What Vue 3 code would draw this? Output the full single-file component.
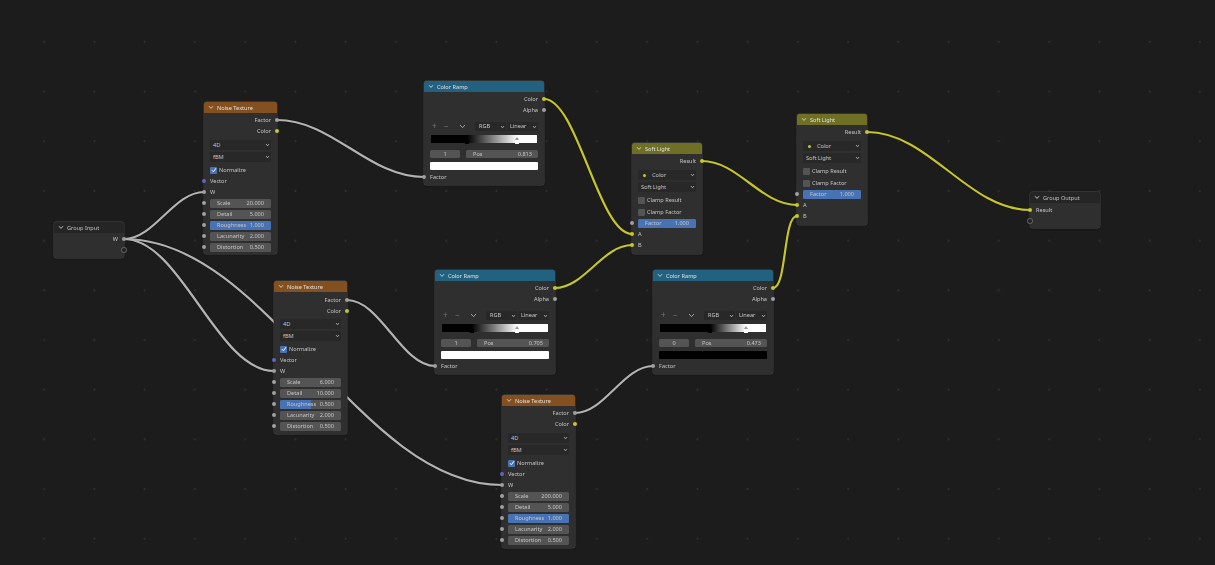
<script setup>
const GRAY = '#b2b2b2'
const YEL = '#c4c42c'

const noiseRows = (scale, detail, rough, frac) => [
  { t: 'out', label: 'Factor', sock: 'gray' },
  { t: 'out', label: 'Color', sock: 'yellow' },
  { t: 'drop', label: '4D', cls: 'first' },
  { t: 'drop', label: 'fBM' },
  { t: 'check', label: 'Normalize', on: true, cls: 'after' },
  { t: 'in', label: 'Vector', sock: 'blue' },
  { t: 'in', label: 'W', sock: 'gray' },
  { t: 'field', label: 'Scale', value: scale, sock: 'gray' },
  { t: 'field', label: 'Detail', value: detail, sock: 'gray' },
  { t: 'field', label: 'Roughness', value: rough, frac, sock: 'gray' },
  { t: 'field', label: 'Lacunarity', value: '2.000', sock: 'gray' },
  { t: 'field', label: 'Distortion', value: '0.500', sock: 'gray' }
]
const rampRows = (black, white, index, pos, bar) => [
  { t: 'out', label: 'Color', sock: 'yellow' },
  { t: 'out', label: 'Alpha', sock: 'gray' },
  { t: 'ramp', black, white, index, pos, bar },
  { t: 'in', label: 'Factor', sock: 'gray', cls: 'after-ramp' }
]
const softRows = () => [
  { t: 'out', label: 'Result', sock: 'yellow' },
  { t: 'drop', label: 'Color', dot: true, cls: 'first' },
  { t: 'drop', label: 'Soft Light' },
  { t: 'check', label: 'Clamp Result', cls: 'after tall' },
  { t: 'check', label: 'Clamp Factor', cls: 'tall' },
  { t: 'field', label: 'Factor', value: '1.000', frac: 1, sock: 'gray', cls: 'wide' },
  { t: 'in', label: 'A', sock: 'yellow' },
  { t: 'in', label: 'B', sock: 'yellow' }
]

const nodes = [
  { title: 'Group Input', kind: 'group', x: 54, y: 222, w: 70, h: 36, cls: 'gi', rows: [
    { t: 'out', label: 'W', sock: 'gray' }, { t: 'out', label: '', sock: 'hollow' }] },
  { title: 'Noise Texture', kind: 'noise', x: 204, y: 102, w: 73, h: 152, rows: noiseRows('20.000', '5.000', '1.000', 1) },
  { title: 'Noise Texture', kind: 'noise', x: 274, y: 281, w: 73, h: 153, cls: 'nb', rows: noiseRows('6.000', '10.000', '0.500', 0.5) },
  { title: 'Noise Texture', kind: 'noise', x: 502, y: 395, w: 73, h: 153, rows: noiseRows('200.000', '5.000', '1.000', 1) },
  { title: 'Color Ramp', kind: 'cramp', x: 424, y: 81, w: 120, h: 104, rows: rampRows(34, 81.3, 1, '0.813', '#ffffff') },
  { title: 'Color Ramp', kind: 'cramp', x: 435, y: 270, w: 120, h: 104, rows: rampRows(28, 70.5, 1, '0.705', '#ffffff') },
  { title: 'Color Ramp', kind: 'cramp', x: 653, y: 270, w: 120, h: 104, rows: rampRows(47.3, 81, 0, '0.473', '#000000') },
  { title: 'Soft Light', kind: 'soft', x: 632, y: 143, w: 70, h: 111, rows: softRows() },
  { title: 'Soft Light', kind: 'soft', x: 797, y: 114, w: 70, h: 111, rows: softRows() },
  { title: 'Group Output', kind: 'group', x: 1030, y: 192, w: 70, h: 36, rows: [
    { t: 'in', label: 'Result', sock: 'yellow' }, { t: 'in', label: '', sock: 'hollow' }] }
]

const wire = (a, b, c, d, color) => {
  const h = Math.max((c - a) * 0.38, 14)
  return { d: `M${a} ${b}C${a + h} ${b} ${c - h} ${d} ${c} ${d}`, color }
}
const wires = [
  wire(124, 239, 204, 192, GRAY),
  wire(124, 239, 274, 371, GRAY),
  wire(124, 239, 502, 485, GRAY),
  wire(277, 120, 424, 177, GRAY),
  wire(347, 300, 435, 366, GRAY),
  wire(575, 413, 653, 366, GRAY),
  wire(544, 99, 632, 234, YEL),
  wire(555, 288, 632, 245, YEL),
  wire(702, 161, 797, 205, YEL),
  wire(773, 288, 797, 216, YEL),
  wire(867, 132, 1030, 210, YEL)
]
const rampBg = (r) =>
  `linear-gradient(90deg,#000 ${r.black}%,#fff ${r.white}%)`
</script>

<template>
  <div class="canvas">
    <svg class="wires" width="1215" height="565" viewBox="0 0 1215 565">
      <path v-for="(w, i) in wires" :key="'o' + i" :d="w.d" fill="none" stroke="#141414" stroke-width="3.4" />
      <path v-for="(w, i) in wires" :key="'c' + i" :d="w.d" fill="none" :stroke="w.color" stroke-width="2.2" />
    </svg>

    <div
      v-for="(n, i) in nodes"
      :key="i"
      class="node"
      :class="[n.kind, n.cls]"
      :style="{ left: n.x + 'px', top: n.y + 'px', width: n.w + 'px', height: n.h + 'px' }"
    >
      <div class="head">
        <svg class="chev" width="6" height="5" viewBox="0 0 6 5"><path d="M1 1.2 3 3.4 5 1.2" fill="none" stroke="#e6e6e6" stroke-width=".8" /></svg>
        <span>{{ n.title }}</span>
      </div>
      <div class="body">
        <template v-for="(r, j) in n.rows" :key="j">
          <div v-if="r.t === 'out'" class="row out">
            <span>{{ r.label }}</span>
            <i class="sock right" :class="r.sock"></i>
          </div>
          <div v-else-if="r.t === 'in'" class="row in" :class="r.cls">
            <i class="sock left" :class="r.sock"></i>
            <span>{{ r.label }}</span>
          </div>
          <div v-else-if="r.t === 'drop'" class="row drop-row" :class="r.cls">
            <div class="drop">
              <i v-if="r.dot" class="dot"></i>
              <span :class="{ dotted: r.dot }">{{ r.label }}</span>
              <svg class="caret" width="5" height="4" viewBox="0 0 5 4"><path d="M1 1 2.5 2.8 4 1" fill="none" stroke="#cfcfcf" stroke-width=".7" /></svg>
            </div>
          </div>
          <div v-else-if="r.t === 'check'" class="row check" :class="r.cls">
            <i class="box" :class="{ on: r.on }">
              <svg v-if="r.on" width="6" height="6" viewBox="0 0 6 6"><path d="M1 3.2 2.4 4.8 5 1.2" fill="none" stroke="#fff" stroke-width="1" /></svg>
            </i>
            <span>{{ r.label }}</span>
          </div>
          <div v-else-if="r.t === 'field'" class="row field-row" :class="r.cls">
            <i class="sock left" :class="r.sock"></i>
            <div class="field">
              <i v-if="r.frac" class="fill" :style="{ width: r.frac * 100 + '%' }"></i>
              <span class="lbl">{{ r.label }}</span>
              <span class="val">{{ r.value }}</span>
            </div>
          </div>
          <div v-else-if="r.t === 'ramp'" class="rampbox">
            <div class="tools">
              <span class="tool plus">+</span>
              <span class="tool minus">−</span>
              <svg class="tool-chev" width="7" height="5" viewBox="0 0 7 5"><path d="M1 1 3.5 3.6 6 1" fill="none" stroke="#bdbdbd" stroke-width=".8" /></svg>
              <div class="mini rgb"><span>RGB</span><svg class="caret" width="5" height="4" viewBox="0 0 5 4"><path d="M1 1 2.5 2.8 4 1" fill="none" stroke="#cfcfcf" stroke-width=".7" /></svg></div>
              <div class="mini lin"><span>Linear</span><svg class="caret" width="5" height="4" viewBox="0 0 5 4"><path d="M1 1 2.5 2.8 4 1" fill="none" stroke="#cfcfcf" stroke-width=".7" /></svg></div>
            </div>
            <div class="grad" :style="{ background: rampBg(r) }">
              <i class="handle dark" :style="{ left: r.black + '%' }"></i>
              <i class="handle light" :style="{ left: r.white + '%' }"></i>
            </div>
            <div class="ramp-vals">
              <div class="idx">{{ r.index }}</div>
              <div class="pos"><span>Pos</span><span>{{ r.pos }}</span></div>
            </div>
            <div class="bar" :style="{ background: r.bar }"></div>
          </div>
        </template>
      </div>
    </div>
  </div>
</template>

<style scoped>
.canvas {
  position: relative;
  width: 1215px;
  height: 565px;
  overflow: hidden;
  background-color: #1c1c1c;
  background-image: radial-gradient(circle, #323232 0, #323232 .7px, transparent 1.3px);
  background-size: 50.25px 49.7px;
  background-position: 19px 17px;
  font-family: "Noto Sans", "DejaVu Sans", sans-serif;
  font-size: 5.6px;
  color: #c6c6c6;
}
.wires { position: absolute; left: 0; top: 0; filter: blur(.25px); }
.node {
  position: absolute;
  box-sizing: border-box;
  display: flex;
  flex-direction: column;
  background: #2f2f2f;
  border-radius: 2.5px;
  box-shadow: 0 0 0 .4px #4a4a4a, 0 1px 2px #0006;
  filter: blur(.3px);
}
.head {
  flex: none;
  height: 11px;
  display: flex;
  align-items: center;
  gap: 3px;
  padding-left: 4px;
  border-radius: 2.5px 2.5px 0 0;
  color: #e0e0e0;
}
.noise .head { background: #84501f; }
.cramp .head { background: #22617f; }
.soft .head { background: #6f7026; }
.group .head { background: #252525; color: #c0c0c0; }
.gi .body { padding-top: .5px; }
.body { padding-top: 1.5px; display: flex; flex-direction: column; }
.nb .body { padding-top: 2.5px; }
.row { position: relative; height: 11px; display: flex; align-items: center; flex: none; }
.out { justify-content: flex-end; padding-right: 6px; }
.in { padding-left: 6px; }
.sock {
  position: absolute;
  top: 3.25px;
  width: 4.5px;
  height: 4.5px;
  border-radius: 50%;
  box-sizing: border-box;
}
.sock.left { left: -2.25px; }
.sock.right { right: -2.25px; }
.sock.gray { background: #a0a0a0; }
.sock.yellow { background: #c7c729; }
.sock.blue { background: #6363c7; }
.sock.hollow {
  top: 2.75px;
  width: 5.5px;
  height: 5.5px;
  border: .7px solid #6a6a6a;
  background: #232323;
}
.sock.hollow.left { left: -2.75px; }
.sock.hollow.right { right: -2.75px; }
.drop-row { height: 12px; padding: 0 6px 0 6px; }
.first { margin-top: 2.5px; }
.nb .first { margin-top: 1.5px; }
.after { margin-top: 1.5px; }
.tall { height: 12px; }
.soft .after { margin-top: 1px; }
.drop {
  position: relative;
  flex: 1;
  height: 10px;
  box-sizing: border-box;
  background: #282828;
  border-radius: 1.5px;
  display: flex;
  align-items: center;
  padding-left: 3px;
}
.caret { position: absolute; right: 1.5px; top: 3px; }
.dot { width: 3px; height: 3px; border-radius: 50%; background: #c7c729; margin-left: 2px; }
.dotted { margin-left: 6px; }
.check { padding-left: 6px; gap: 2px; }
.box {
  width: 7px;
  height: 7px;
  border-radius: 1px;
  background: #545454;
  display: flex;
  align-items: center;
  justify-content: center;
}
.box.on { background: #4772b3; }
.field-row { padding: 0 6px; }
.field-row.wide { margin-top: -.5px; }
.field {
  position: relative;
  flex: 1;
  height: 9px;
  border-radius: 1.5px;
  overflow: hidden;
  background: #545454;
  display: flex;
  align-items: center;
  justify-content: space-between;
  padding: 0 7px 0 7px;
}
.fill { position: absolute; left: 0; top: 0; bottom: 0; background: #4772b3; }
.lbl, .val { position: relative; }
.rampbox { padding: 0 6px; margin-top: 5.5px; }
.tools { height: 10px; display: flex; align-items: center; color: #777; position: relative; }
.tool { position: absolute; font-size: 8px; line-height: 10px; }
.plus { left: 2px; }
.minus { left: 14px; }
.tool-chev { position: absolute; left: 29px; top: 3px; }
.mini {
  position: relative;
  height: 9px;
  box-sizing: border-box;
  background: #282828;
  border-radius: 1.5px;
  display: flex;
  align-items: center;
  padding-left: 3px;
  color: #c6c6c6;
}
.rgb { width: 31px; margin-left: 45px; margin-right: 1px; padding-left: 4px; }
.lin { width: 31px; }
.grad { position: relative; height: 8px; margin: 4px 1px 0 1px; }
.handle { position: absolute; top: 5px; width: 4px; height: 4px; margin-left: -2px; }
.handle.dark { background: #000; }
.handle.light { background: #fff; }
.handle.light::before {
  content: "";
  position: absolute;
  left: 0;
  top: -3px;
  border-left: 2px solid transparent;
  border-right: 2px solid transparent;
  border-bottom: 3px solid #9a9a9a;
}
.ramp-vals { display: flex; gap: 6px; height: 8px; margin-top: 7px; }
.idx, .pos {
  background: #545454;
  border-radius: 1.5px;
  display: flex;
  align-items: center;
}
.idx { width: 30px; justify-content: center; }
.pos { flex: 1; justify-content: space-between; padding: 0 6px 0 7px; }
.bar { height: 8px; margin-top: 4px; border-radius: 1px; }
.after-ramp { margin-top: 1.5px; }
</style>
